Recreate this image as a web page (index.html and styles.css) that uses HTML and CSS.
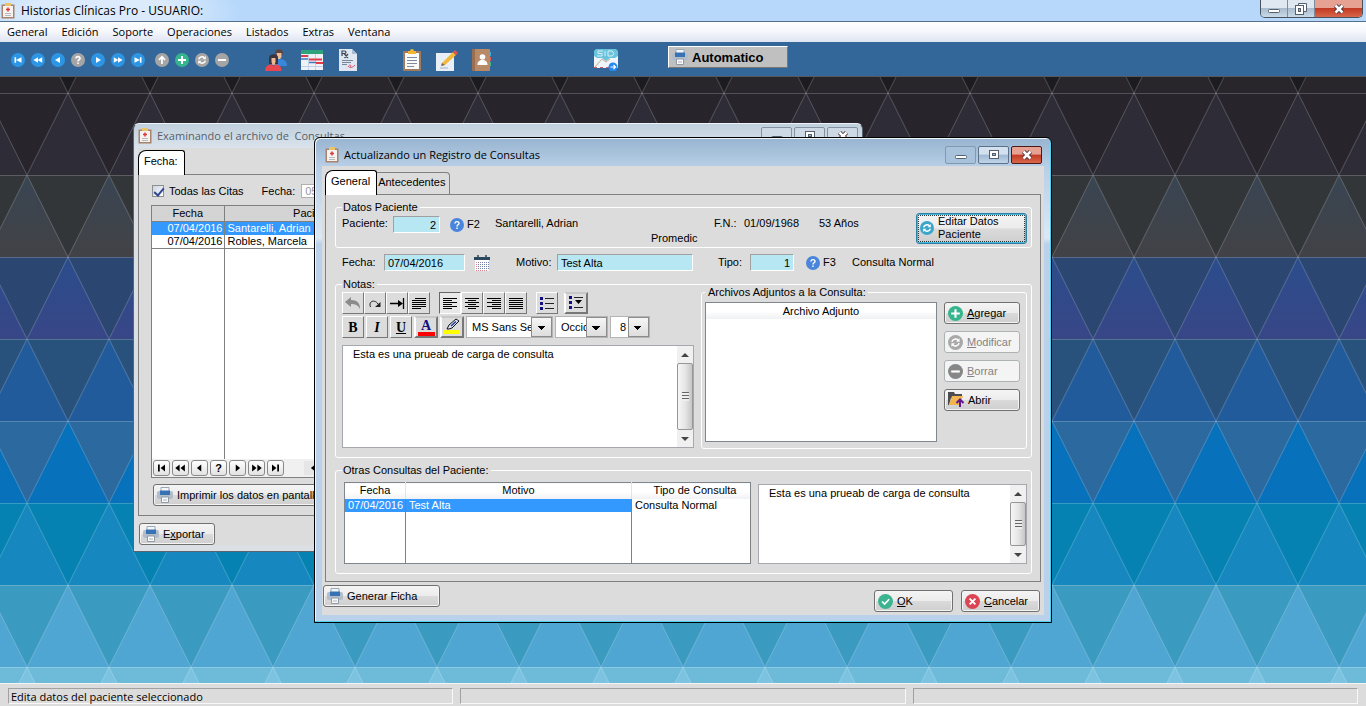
FILE: index.html
```html
<!DOCTYPE html>
<html lang="es">

<head>
    <meta charset="UTF-8">
    <meta name="viewport" content="width=device-width, initial-scale=1.0">
    <title>Historias Clínicas Pro</title>
    <link rel="stylesheet" href="styles.css">
</head>

<body>
    <!-- Icons -->
    <svg class="sprite" aria-hidden="true">
        <symbol id="i-app" viewBox="0 0 14 16">
            <rect x="0.5" y="1.5" width="13" height="14" fill="#a8826a" />
            <rect x="2" y="3" width="10" height="11" fill="#f5f3f2" />
            <rect x="4" y="0" width="6" height="3" fill="#e9c46a" />
            <path d="M7 4.500v4M5 6.500h4" stroke="#dd3a3a" stroke-width="1.500" />
            <path d="M4 10.500h6M4 12.500h6" stroke="#b9b9b9" />
        </symbol>
        <symbol id="i-first" viewBox="0 0 14 14">
            <circle cx="7" cy="7" r="7" fill="#2d96e4" />
            <path d="M3.500 4.200h1.600v5.600H3.500zM10.500 4.200v5.600L5 7z" fill="#fff" />
        </symbol>
        <symbol id="i-rew" viewBox="0 0 14 14">
            <circle cx="7" cy="7" r="7" fill="#2d96e4" />
            <path d="M7 4.200v5.600L2.400 7zM11.200 4.200v5.600L6.600 7z" fill="#fff" />
        </symbol>
        <symbol id="i-prev" viewBox="0 0 14 14">
            <circle cx="7" cy="7" r="7" fill="#2d96e4" />
            <path d="M9 4v6L4 7z" fill="#fff" />
        </symbol>
        <symbol id="i-ask" viewBox="0 0 14 14">
            <circle cx="7" cy="7" r="7" fill="#a5a5a5" />
            <path d="M5 5.600C5 3 9 3 9 5.400 9 6.800 7 6.700 7 8.400M7 9.500v1.500" stroke="#fff" stroke-width="1.600" fill="none" />
        </symbol>
        <symbol id="i-up" viewBox="0 0 14 14">
            <circle cx="7" cy="7" r="7" fill="#a5a5a5" />
            <path d="M7 11V4M4 6.800l3-3 3 3" stroke="#fff" stroke-width="1.700" fill="none" />
        </symbol>
        <symbol id="i-plus" viewBox="0 0 14 14">
            <circle cx="7" cy="7" r="7" fill="#35b58e" />
            <path d="M7 3v8M3 7h8" stroke="#fff" stroke-width="2" />
        </symbol>
        <symbol id="i-sync" viewBox="0 0 14 14">
            <circle cx="7" cy="7" r="7" fill="currentColor" />
            <path d="M3.600 6.400C4.200 3.800 7.500 3 9.600 4.800M10.400 7.600C9.800 10.200 6.500 11 4.400 9.200" stroke="#fff" stroke-width="1.400" fill="none" />
            <path d="M10.800 3v3.200H7.600zM3.200 11V7.800h3.200z" fill="#fff" />
        </symbol>
        <symbol id="i-minus" viewBox="0 0 14 14">
            <circle cx="7" cy="7" r="7" fill="currentColor" />
            <path d="M3 7h8" stroke="#fff" stroke-width="2" />
        </symbol>
        <symbol id="i-help" viewBox="0 0 14 14">
            <circle cx="7" cy="7" r="7" fill="#4a85dc" />
            <path d="M5 5.600C5 3 9 3 9 5.400 9 6.800 7 6.700 7 8.400M7 9.500v1.500" stroke="#fff" stroke-width="1.400" fill="none" />
        </symbol>
        <symbol id="i-users" viewBox="0 0 22 22">
            <circle cx="14" cy="4" r="3.800" fill="#5b4540" />
            <path d="M11.500 4h5v4l-1.500 2h-2z" fill="#f0bd98" />
            <path d="M9 17c0-5 2-7 6-7s7 2 7 7z" fill="#3a86d8" />
            <path d="M4 15V9c0-5 9-5 9 0v6z" fill="#3a3340" />
            <path d="M6.500 9h4v4l-1 3h-2l-1-3z" fill="#efb893" />
            <path d="M0 22c0-5 3-6.500 7-6.500l1.500 2 1.500-2c4 0 6.500 1.500 6.500 6.500z" fill="#ea4650" />
        </symbol>
        <symbol id="i-schedule" viewBox="0 0 22 20">
            <rect width="22" height="20" fill="#eef1f6" />
            <rect width="22" height="4" fill="#2fa37c" />
            <path d="M7.500 4v16M14.500 4v16M0 16.500h22" stroke="#c3d1e6" />
            <path d="M0 6h7M8 9.500h13M15 13h7" stroke="#df3b48" stroke-width="2" />
            <path d="M0 9h7M8 12.500h7" stroke="#4377c4" stroke-width="1.500" />
        </symbol>
        <symbol id="i-recipe" viewBox="0 0 18 22">
            <path d="M0 0h13l5 5v17H0z" fill="#dfe8f2" />
            <path d="M13 0v5h5z" fill="#a9bdd2" />
            <path d="M3 7V2h2.500c2 0 2 2.500 0 2.500H3M5 4.500L9 9M9 5L5.500 9" stroke="#3c4654" stroke-width="1.200" fill="none" />
            <path d="M3 11.500h11M3 13.500h9M3 15.500h5" stroke="#78879a" />
            <path d="M9 18c2-4 4-1 2 0s3 1 5-2" stroke="#e0516a" fill="none" />
        </symbol>
        <symbol id="i-notes" viewBox="0 0 18 22">
            <rect y="2" width="18" height="20" rx="1" fill="#a27a5c" />
            <rect x="2" y="4" width="14" height="16" fill="#fafafa" />
            <path d="M5 2h2a2 2 0 0 1 4 0h2v3H5z" fill="#f2b632" />
            <path d="M4 8.500h10M4 11.500h10M4 14.500h10M4 17.500h7" stroke="#7b8b9c" />
        </symbol>
        <symbol id="i-edit" viewBox="0 0 22 22">
            <rect y="4" width="18" height="18" fill="#e8eff7" />
            <path d="M6 14L17 3l3 3L9 16l-4 1z" fill="#f4b93c" />
            <path d="M17 3l2-2 3 3-2 2z" fill="#e2504f" />
            <path d="M6 14l3 2-4 1z" fill="#7d6a54" />
            <path d="M4 19h8" stroke="#a2b3c4" />
        </symbol>
        <symbol id="i-contacts" viewBox="0 0 20 22">
            <path d="M17 3h2v4h-2z" fill="#39a7d8" />
            <path d="M17 8h2v4h-2z" fill="#df5757" />
            <path d="M17 13h2v4h-2z" fill="#45b585" />
            <rect width="18" height="22" rx="1" fill="#b98a68" />
            <path d="M0 0h3v22H0z" fill="#9a6e50" />
            <circle cx="10.500" cy="8" r="2.800" fill="#fff" />
            <path d="M5.500 16c0-4 2-4 3.500-5h3c1.500 1 3.500 1 3.500 5z" fill="#fff" />
        </symbol>
        <symbol id="i-mail" viewBox="0 0 24 22">
            <path d="M0 3h24v16H0z" fill="#eef6f9" />
            <path d="M0 7V2l2-2h20l2 2v5l-3 2h-5l-4 3-4-3H3z" fill="#69c3dd" />
            <path d="M9 2H4v2.500h4V7H3M11 2v5M14 2v5h4l2-2.500L18 2z" stroke="#d7f1f8" fill="none" />
            <path d="M1 18l7-8M8 10l4 3 4-3" stroke="#c9a98f" fill="none" />
            <path d="M0 18.500h15" stroke="#d95b63" stroke-dasharray="3 3" />
            <circle cx="19" cy="18" r="4.500" fill="#2687f0" />
            <path d="M16.500 18h5M19.500 16l2 2-2 2" stroke="#fff" stroke-width="1.200" fill="none" />
        </symbol>
        <symbol id="i-printer" viewBox="0 0 16 16">
            <path d="M4 .5h8V5H4z" fill="#f3f6f9" stroke="#9aa7b4" />
            <rect y="4" width="16" height="8" rx="2" fill="#b2bdc9" />
            <path d="M3 3.500h10V8H3z" fill="#3773b4" />
            <path d="M4.500 10h7v5.500h-7z" fill="#fafafa" stroke="#8f9aa6" />
            <path d="M6 13h4" stroke="#a9b2ba" />
        </symbol>
        <symbol id="i-calendar" viewBox="0 0 16 16">
            <rect x="1" y="2" width="14" height="14" fill="#fff" />
            <path d="M0 2h16v3H0z" fill="#29485c" />
            <path d="M4 0v3M12 0v3" stroke="#29485c" stroke-width="1.500" />
            <path d="M4 7.500h11M4 9.500h11M4 11.500h11M4 13.500h11" stroke="#7283a8" stroke-dasharray="1 1" />
            <path d="M2 15.500h12M2.500 7v8" stroke="#e5838b" stroke-dasharray="1 1" />
        </symbol>
        <symbol id="i-folder" viewBox="0 0 16 16">
            <path d="M0 0h6l1 2h7v4H3L1 13H0z" fill="#4c4c50" />
            <path d="M4 4h11l-3 9H1z" fill="#f3b64f" />
            <path d="M12 15V8M8.500 11L12 7.500l3.500 3.500" stroke="#601a91" stroke-width="2" fill="none" />
        </symbol>
        <symbol id="i-ok" viewBox="0 0 14 14">
            <circle cx="7" cy="7" r="7" fill="#3cb391" />
            <path d="M3.800 7l2.400 2.400 4.200-4.500" stroke="#fff" stroke-width="1.600" fill="none" />
        </symbol>
        <symbol id="i-cancel" viewBox="0 0 14 14">
            <circle cx="7" cy="7" r="7" fill="#da4453" />
            <path d="M4.300 4.300l5.400 5.400M9.700 4.300L4.300 9.700" stroke="#fff" stroke-width="1.800" />
        </symbol>
        <symbol id="i-undo" viewBox="0 0 18 16">
            <path d="M1 7l6-5v3c6 0 9 3 9 9-2-4-5-5-9-5v3z" fill="#8b8b8b" />
        </symbol>
        <symbol id="i-redo" viewBox="0 0 18 16">
            <path d="M4.500 12C2 6 9 4 12 9" stroke="#222" fill="none" />
            <path d="M14.500 7v5H9z" fill="#222" />
        </symbol>
        <symbol id="i-tab" viewBox="0 0 18 16">
            <path d="M2 8.500h11M15.500 3v11" stroke="#000" stroke-width="1.300" />
            <path d="M10 5l5 3.500-5 3.500z" fill="#000" />
        </symbol>
        <symbol id="i-para" viewBox="0 0 18 16">
            <path d="M5 3.500h11M2 5.500h14M2 7.500h14M2 9.500h14M2 11.500h14M2 13.500h9" stroke="#000" />
        </symbol>
        <symbol id="i-left" viewBox="0 0 18 16">
            <path d="M2 3.500h14M2 5.500h9M2 7.500h14M2 9.500h9M2 11.500h14M2 13.500h9" stroke="#000" />
        </symbol>
        <symbol id="i-center" viewBox="0 0 18 16">
            <path d="M2 3.500h14M5 5.500h8M2 7.500h14M5 9.500h8M2 11.500h14M5 13.500h8" stroke="#000" />
        </symbol>
        <symbol id="i-right" viewBox="0 0 18 16">
            <path d="M2 3.500h14M7 5.500h9M2 7.500h14M7 9.500h9M2 11.500h14M7 13.500h9" stroke="#000" />
        </symbol>
        <symbol id="i-justify" viewBox="0 0 18 16">
            <path d="M2 3.500h14M2 5.500h14M2 7.500h14M2 9.500h14M2 11.500h14M2 13.500h14" stroke="#000" />
        </symbol>
        <symbol id="i-bullets" viewBox="0 0 18 16">
            <path d="M2 2h3v3H2zM2 7h3v3H2zM2 12h3v3H2z" fill="#101080" />
            <path d="M7 3.500h9M7 8.500h9M7 13.500h9" stroke="#222" />
        </symbol>
        <symbol id="i-bulletmenu" viewBox="0 0 18 16">
            <path d="M2 1h3v3H2zM2 6h3v3H2zM2 11h3v3H2z" fill="#101080" />
            <path d="M7 2.500h9M7 12.500h9" stroke="#222" />
            <path d="M8 5h7l-3.500 4z" fill="#000" />
        </symbol>
        <symbol id="i-marker" viewBox="0 0 18 18">
            <path d="M1 12h16v4H1z" fill="#ffff00" />
            <path d="M4 11l2-4 7-6 3 2-7 7-3 1z" fill="#dbe6f5" stroke="#111" />
            <path d="M8 8l5-4.500" stroke="#2038a0" stroke-width="1.500" />
        </symbol>
        <symbol id="n-first" viewBox="0 0 16 16">
            <path d="M4 4h2v8H4zM12 4v8L7 8z" />
        </symbol>
        <symbol id="n-rew" viewBox="0 0 16 16">
            <path d="M7 4v8L2 8zM13 4v8L8 8z" />
        </symbol>
        <symbol id="n-prev" viewBox="0 0 16 16">
            <path d="M10 4v8L5 8z" />
        </symbol>
        <symbol id="n-next" viewBox="0 0 16 16">
            <path d="M6 4v8l5-4z" />
        </symbol>
        <symbol id="n-ff" viewBox="0 0 16 16">
            <path d="M3 4v8l5-4zM9 4v8l5-4z" />
        </symbol>
        <symbol id="n-last" viewBox="0 0 16 16">
            <path d="M4 4v8l5-4zM10 4h2v8h-2z" />
        </symbol>
        <symbol id="w-min" viewBox="0 0 14 12">
            <rect x="1.500" y="6.500" width="11" height="3" rx="1" fill="#fff" stroke="#55606e" />
        </symbol>
        <symbol id="w-max" viewBox="0 0 14 12">
            <rect x="2.500" y="1.500" width="9" height="8" fill="#fff" stroke="#55606e" />
            <rect x="5.500" y="4.500" width="3" height="2" fill="#9fb4cc" stroke="#55606e" />
        </symbol>
        <symbol id="w-restore" viewBox="0 0 14 12">
            <path d="M4.500 .5h8v8h-8z" fill="#fff" stroke="#55606e" />
            <rect x="1.500" y="2.500" width="8" height="9" fill="#fff" stroke="#55606e" />
            <rect x="4.500" y="5.500" width="2" height="3" fill="#9fb4cc" stroke="#55606e" />
        </symbol>
        <symbol id="w-close" viewBox="0 0 14 12">
            <path d="M3.500 2.500l7 7M10.500 2.500l-7 7" stroke="#4d3238" stroke-width="4.400" />
            <path d="M3.500 2.500l7 7M10.500 2.500l-7 7" stroke="#fff" stroke-width="2.500" />
        </symbol>
    </svg>

    <header class="titlebar">
        <svg class="app-icon"><use href="#i-app" /></svg>
        <h1>Historias Clínicas Pro - USUARIO:</h1>
        <div class="caption-buttons">
            <button aria-label="Minimizar"><svg><use href="#w-min" /></svg></button>
            <button aria-label="Restaurar"><svg><use href="#w-restore" /></svg></button>
            <button class="close" aria-label="Cerrar"><svg><use href="#w-close" /></svg></button>
        </div>
    </header>

    <nav class="menu">
        <a href="#">General</a>
        <a href="#">Edición</a>
        <a href="#">Soporte</a>
        <a href="#">Operaciones</a>
        <a href="#">Listados</a>
        <a href="#">Extras</a>
        <a href="#">Ventana</a>
    </nav>

    <div class="toolbar">
        <div class="tool-group nav-tools">
            <button aria-label="Primero"><svg><use href="#i-first" /></svg></button>
            <button aria-label="Página anterior"><svg><use href="#i-rew" /></svg></button>
            <button aria-label="Anterior"><svg><use href="#i-prev" /></svg></button>
            <button aria-label="Buscar"><svg><use href="#i-ask" /></svg></button>
            <button aria-label="Siguiente"><svg class="flip"><use href="#i-prev" /></svg></button>
            <button aria-label="Página siguiente"><svg class="flip"><use href="#i-rew" /></svg></button>
            <button aria-label="Último"><svg class="flip"><use href="#i-first" /></svg></button>
        </div>
        <div class="tool-group edit-tools">
            <button aria-label="Seleccionar"><svg><use href="#i-up" /></svg></button>
            <button aria-label="Insertar"><svg><use href="#i-plus" /></svg></button>
            <button aria-label="Cambiar"><svg><use href="#i-sync" /></svg></button>
            <button aria-label="Eliminar"><svg><use href="#i-minus" /></svg></button>
        </div>
        <div class="tool-group big-tools">
            <button aria-label="Pacientes"><svg><use href="#i-users" /></svg></button>
            <button aria-label="Turnos"><svg><use href="#i-schedule" /></svg></button>
            <button aria-label="Recetas"><svg><use href="#i-recipe" /></svg></button>
        </div>
        <div class="tool-group big-tools second">
            <button aria-label="Consultas"><svg><use href="#i-notes" /></svg></button>
            <button aria-label="Notas"><svg><use href="#i-edit" /></svg></button>
            <button aria-label="Agenda"><svg><use href="#i-contacts" /></svg></button>
        </div>
        <div class="tool-group big-tools third">
            <button aria-label="Enviar correo"><svg><use href="#i-mail" /></svg></button>
        </div>
        <button class="auto"><svg><use href="#i-printer" /></svg>Automatico</button>
    </div>

    <main class="desktop">
        <svg class="wallpaper" aria-hidden="true">
            <defs>
                <linearGradient id="slate" x2="0" y2="1">
                    <stop offset="0" stop-color="#394553" />
                    <stop offset="1" stop-color="#424246" />
                </linearGradient>
                <linearGradient id="navy" x2="0" y2="1">
                    <stop offset="0" stop-color="#2b4d8c" />
                    <stop offset="1" stop-color="#384686" />
                </linearGradient>
                <pattern id="triangles" x="27" y="0" width="82" height="1000" patternUnits="userSpaceOnUse">
                    <rect width="82" height="16" fill="#28262b" />
                    <path d="M33 0h16l-8 16z" fill="#1c1c20" />
                    <rect y="16" width="82" height="82" fill="#27252b" />
                    <path d="M41 16l41 82H0z" fill="#2e2c37" />
                    <rect y="98" width="82" height="82" fill="url(#slate)" />
                    <path d="M0 98h82l-41 82z" fill="#323638" />
                    <rect y="180" width="82" height="82" fill="#2b4671" />
                    <path d="M41 180l41 82H0z" fill="url(#navy)" />
                    <rect y="262" width="82" height="82" fill="#215b9b" />
                    <path d="M0 262h82l-41 82z" fill="#28527c" />
                    <rect y="344" width="82" height="82" fill="#2c699f" />
                    <path d="M41 344l41 82H0z" fill="#0871bb" />
                    <rect y="426" width="82" height="82" fill="#1788bf" />
                    <path d="M0 426h82l-41 82z" fill="#0582b2" />
                    <rect y="508" width="82" height="82" fill="#3a9abf" />
                    <path d="M41 508l41 82H0z" fill="#50a6d3" />
                    <rect y="590" width="82" height="410" fill="#7cc3e2" />
                    <path d="M0 590h82l-8 16H8z" fill="#6dbbd9" />
                    <g fill="none" stroke="#fff" stroke-opacity=".2">
                        <path d="M33 0l49 98-41 82 41 82-41 82 41 82-41 82 41 82-8 16M49 0L0 98l41 82-41 82 41 82-41 82 41 82-41 82 8 16" />
                        <path d="M0 16.500h82M0 98.500h82M0 180.500h82M0 262.500h82M0 344.500h82M0 426.500h82M0 508.500h82M0 590.500h82" />
                    </g>
                </pattern>
            </defs>
            <rect width="100%" height="100%" fill="url(#triangles)" />
        </svg>

        <!-- Browse window -->
        <section class="window browse">
            <div class="window-title">
                <svg class="app-icon"><use href="#i-app" /></svg>
                <h2>Examinando el archivo de  Consultas</h2>
                <div class="window-buttons">
                    <button aria-label="Minimizar"><svg><use href="#w-min" /></svg></button>
                    <button aria-label="Maximizar"><svg><use href="#w-max" /></svg></button>
                    <button aria-label="Cerrar"><svg><use href="#w-close" /></svg></button>
                </div>
            </div>
            <div class="client">
                <div class="tabs">
                    <button class="tab active">Fecha:</button>
                </div>
                <div class="panel">
                    <div class="filter">
                        <input type="checkbox" id="todas" checked>
                        <label for="todas">Todas las Citas</label>
                        <label class="date-label" for="filtro-fecha">Fecha:</label>
                        <input type="text" id="filtro-fecha" value="05/01/2022" disabled>
                    </div>
                    <div class="browse-box">
                        <table class="browse-table">
                            <thead>
                                <tr>
                                    <th class="col-date">Fecha</th>
                                    <th class="col-name">Paciente</th>
                                    <th></th>
                                </tr>
                            </thead>
                            <tbody>
                                <tr class="selected">
                                    <td>07/04/2016</td>
                                    <td>Santarelli, Adrian</td>
                                    <td></td>
                                </tr>
                                <tr class="last">
                                    <td>07/04/2016</td>
                                    <td>Robles, Marcela</td>
                                    <td></td>
                                </tr>
                                <tr class="filler">
                                    <td></td>
                                    <td></td>
                                    <td></td>
                                </tr>
                            </tbody>
                        </table>
                        <div class="vcr">
                            <button aria-label="Primero"><svg><use href="#n-first" /></svg></button>
                            <button aria-label="Página anterior"><svg><use href="#n-rew" /></svg></button>
                            <button aria-label="Anterior"><svg><use href="#n-prev" /></svg></button>
                            <button>?</button>
                            <button aria-label="Siguiente"><svg><use href="#n-next" /></svg></button>
                            <button aria-label="Página siguiente"><svg><use href="#n-ff" /></svg></button>
                            <button aria-label="Último"><svg><use href="#n-last" /></svg></button>
                            <div class="hscroll"><svg><use href="#n-prev" /></svg></div>
                        </div>
                    </div>
                    <button class="btn print"><svg><use href="#i-printer" /></svg>Imprimir los datos en pantalla</button>
                </div>
                <button class="btn export"><svg><use href="#i-printer" /></svg><span>E<u>x</u>portar</span></button>
            </div>
        </section>

        <!-- Record form window -->
        <section class="window form">
            <div class="window-title">
                <svg class="app-icon"><use href="#i-app" /></svg>
                <h2>Actualizando un Registro de Consultas</h2>
                <div class="window-buttons">
                    <button class="dim" aria-label="Minimizar"><svg><use href="#w-min" /></svg></button>
                    <button aria-label="Maximizar"><svg><use href="#w-max" /></svg></button>
                    <button class="close" aria-label="Cerrar"><svg><use href="#w-close" /></svg></button>
                </div>
            </div>
            <div class="client">
                <div class="tabs">
                    <button class="tab active">General</button>
                    <button class="tab">Antecedentes</button>
                </div>
                <div class="panel">
                    <fieldset>
                        <legend>Datos Paciente</legend>
                        <div class="patient">
                            <label for="paciente">Paciente:</label>
                            <input type="text" class="field number" id="paciente" value="2">
                            <span class="lookup"><svg><use href="#i-help" /></svg>F2</span>
                            <span class="name">Santarelli, Adrian</span>
                            <span class="born">F.N.:</span>
                            <span>01/09/1968</span>
                            <span>53 Años</span>
                            <button class="btn edit-patient"><svg><use href="#i-sync" /></svg>Editar Datos<br>Paciente</button>
                            <span class="plan">Promedic</span>
                        </div>
                    </fieldset>

                    <div class="visit">
                        <label for="fecha">Fecha:</label>
                        <input type="text" class="field" id="fecha" value="07/04/2016">
                        <button class="calendar" aria-label="Calendario"><svg><use href="#i-calendar" /></svg></button>
                        <label for="motivo">Motivo:</label>
                        <input type="text" class="field" id="motivo" value="Test Alta">
                        <label for="tipo">Tipo:</label>
                        <input type="text" class="field number" id="tipo" value="1">
                        <span class="lookup"><svg><use href="#i-help" /></svg>F3</span>
                        <span>Consulta Normal</span>
                    </div>

                    <fieldset class="notes">
                        <legend>Notas:</legend>
                        <div class="editor">
                            <div class="format">
                                <button aria-label="Deshacer"><svg><use href="#i-undo" /></svg></button>
                                <button aria-label="Rehacer"><svg><use href="#i-redo" /></svg></button>
                                <button aria-label="Tabulación"><svg><use href="#i-tab" /></svg></button>
                                <button aria-label="Párrafo"><svg><use href="#i-para" /></svg></button>
                                <button class="pressed space" aria-label="Izquierda"><svg><use href="#i-left" /></svg></button>
                                <button aria-label="Centrar"><svg><use href="#i-center" /></svg></button>
                                <button aria-label="Derecha"><svg><use href="#i-right" /></svg></button>
                                <button aria-label="Justificar"><svg><use href="#i-justify" /></svg></button>
                                <button class="space" aria-label="Viñetas"><svg><use href="#i-bullets" /></svg></button>
                                <button class="framed" aria-label="Tipo de viñeta"><svg><use href="#i-bulletmenu" /></svg></button>
                            </div>
                            <div class="format fonts">
                                <button><b>B</b></button>
                                <button><i>I</i></button>
                                <button><u>U</u></button>
                                <button class="framed ink"><span>A</span></button>
                                <button class="framed marker" aria-label="Resaltar"><svg><use href="#i-marker" /></svg></button>
                                <span class="combo font-name"><select aria-label="Fuente"><option>MS Sans Serif</option></select></span>
                                <span class="combo charset"><select aria-label="Alfabeto"><option>Occidental</option></select></span>
                                <span class="combo size"><select aria-label="Tamaño"><option>8</option></select></span>
                            </div>
                            <div class="memo">
                                <textarea aria-label="Notas">Esta es una prueab de carga de consulta</textarea>
                                <div class="scrollbar"><i class="arrow up"></i><i class="thumb"></i><i class="arrow down"></i></div>
                            </div>
                        </div>
                        <fieldset class="attachments">
                            <legend>Archivos Adjuntos a la Consulta:</legend>
                            <div class="files">
                                <div class="files-head">Archivo Adjunto</div>
                            </div>
                            <div class="file-buttons">
                                <button class="btn"><svg><use href="#i-plus" /></svg><span><u>A</u>gregar</span></button>
                                <button class="btn" disabled><svg><use href="#i-sync" /></svg><span><u>M</u>odificar</span></button>
                                <button class="btn dark" disabled><svg><use href="#i-minus" /></svg><span><u>B</u>orrar</span></button>
                                <button class="btn open"><svg><use href="#i-folder" /></svg>Abrir</button>
                            </div>
                        </fieldset>
                    </fieldset>

                    <fieldset class="others">
                        <legend>Otras Consultas del Paciente:</legend>
                        <table class="others-table">
                            <thead>
                                <tr>
                                    <th class="col-date">Fecha</th>
                                    <th>Motivo</th>
                                    <th class="col-type">Tipo de Consulta</th>
                                </tr>
                            </thead>
                            <tbody>
                                <tr>
                                    <td class="selected">07/04/2016</td>
                                    <td class="selected">Test Alta</td>
                                    <td>Consulta Normal</td>
                                </tr>
                                <tr class="filler">
                                    <td></td>
                                    <td></td>
                                    <td></td>
                                </tr>
                            </tbody>
                        </table>
                        <div class="memo">
                            <textarea aria-label="Notas de la consulta" readonly>Esta es una prueab de carga de consulta</textarea>
                            <div class="scrollbar"><i class="arrow up"></i><i class="thumb"></i><i class="arrow down"></i></div>
                        </div>
                    </fieldset>
                </div>
                <div class="actions">
                    <button class="btn generate"><svg><use href="#i-printer" /></svg>Generar Ficha</button>
                    <button class="btn confirm"><svg><use href="#i-ok" /></svg><span><u>O</u>K</span></button>
                    <button class="btn confirm"><svg><use href="#i-cancel" /></svg><span><u>C</u>ancelar</span></button>
                </div>
            </div>
        </section>
    </main>

    <footer class="statusbar">
        <div>Edita datos del paciente seleccionado</div>
        <div></div>
        <div></div>
    </footer>
</body>

</html>
```
FILE: styles.css
```css
* {
    margin: 0;
    padding: 0;
    box-sizing: border-box;
}

body {
    display: flex;
    flex-direction: column;
    min-height: 100vh;
    overflow: hidden;
    font-family: "Liberation Sans", Arial, sans-serif;
    font-size: 11px;
    line-height: 13px;
    color: #000;
}

button,
input,
select,
textarea {
    font: inherit;
    color: inherit;
}

button {
    border: none;
    background: none;
}

svg {
    display: block;
    flex: none;
}

.sprite {
    position: absolute;
    width: 0;
    height: 0;
}

.app-icon {
    width: 14px;
    height: 16px;
}

/* Main title bar */
.titlebar {
    display: flex;
    align-items: center;
    height: 22px;
    padding-left: 1px;
    background: radial-gradient(ellipse 140px 40px at 100px 12px, #dcebfb 50%, transparent), #b7d8fb;
    border-bottom: 1px solid #54708e;
}

.titlebar h1,
.window-title h2,
.menu,
.statusbar {
    font-family: "Open Sans", "Segoe UI", sans-serif;
    font-size: 11px;
    font-weight: normal;
    line-height: 16px;
    white-space: pre;
}

.titlebar h1 {
    margin-left: 6px;
    font-size: 12px;
}

.caption-buttons {
    display: flex;
    align-self: flex-start;
    margin-left: auto;
    margin-right: 3px;
    border: 1px solid #46535f;
    border-top: none;
    border-radius: 0 0 5px 5px;
    overflow: hidden;
}

.caption-buttons button {
    display: flex;
    align-items: center;
    justify-content: center;
    width: 27px;
    height: 17px;
    border-right: 1px solid #7e8d9c;
    background: linear-gradient(#dfe8f1 45%, #a9bccd 50%, #c9d9e8);
}

.caption-buttons .close {
    width: 47px;
    border: none;
}

.close {
    background: linear-gradient(#e6a192 45%, #c23a23 50%, #d8674b) !important;
}

.caption-buttons svg,
.window-buttons svg {
    width: 14px;
    height: 12px;
}

.menu {
    display: flex;
    gap: 14px;
    height: 20px;
    padding: 2px 7px;
    background: linear-gradient(#fff, #f4f6fb 50%, #dfe4f1);
}

.menu a {
    color: #000;
    text-decoration: none;
}

/* Toolbar */
.toolbar {
    display: flex;
    align-items: center;
    height: 35px;
    padding: 2px 0 0 11px;
    background: #336699;
    border-bottom: 1px solid #55595f;
}

.tool-group {
    display: flex;
    align-items: center;
}

.nav-tools,
.edit-tools {
    gap: 6px;
}

.nav-tools svg,
.edit-tools svg {
    width: 14px;
    height: 14px;
    color: #a5a5a5;
}

.flip {
    transform: scaleX(-1);
}

.edit-tools {
    margin-left: 10px;
}

.big-tools {
    gap: 14px;
    margin-left: 36px;
}

.big-tools svg {
    width: 22px;
    height: 22px;
}

.big-tools.second {
    margin-left: 42px;
    gap: 13px;
}

.big-tools.third {
    margin-left: 101px;
}

.big-tools.third svg {
    width: 24px;
}

.auto {
    display: flex;
    align-items: center;
    gap: 4px;
    width: 120px;
    height: 22px;
    margin: 0 0 6px 50px;
    padding-left: 3px;
    background: #c0c0c0;
    border: 1px solid;
    border-color: #fff #777 #777 #fff;
    font-size: 13px;
    font-weight: bold;
}

.auto svg,
.btn svg {
    width: 16px;
    height: 16px;
}

/* Desktop and windows */
.desktop {
    position: relative;
    flex: 1;
    min-height: 606px;
    overflow: hidden;
}

.wallpaper {
    position: absolute;
    width: 100%;
    height: 100%;
}

.window {
    position: absolute;
    border-radius: 6px 6px 0 0;
}

.browse {
    left: 133px;
    top: 46px;
    width: 730px;
    padding: 0 4px 4px;
    background: linear-gradient(#c0d0dd, #dae3ec 24px, #dcdfe3 60px);
    border: 1px solid #5a646e;
    border-top-color: #eef3f7;
}

.form {
    left: 314px;
    top: 60px;
    width: 738px;
    padding: 0 7px 7px;
    background: linear-gradient(#98b4d0, #b7cee6 28px, #dbe9f6 100px, #b9d1ea 106px);
    border: 1px solid #000;
    box-shadow: inset -1px -1px #4fd0ee, inset 1px 1px #eef6fc;
}

.window-title {
    display: flex;
    align-items: center;
}

.browse .window-title {
    height: 24px;
    color: #56606a;
}

.form .window-title {
    height: 28px;
    padding: 6px 2px 0 3px;
}

.window-title h2 {
    margin-left: 5px;
}

.window-buttons {
    display: flex;
    gap: 2px;
    margin-left: auto;
}

.window-buttons button {
    display: flex;
    align-items: center;
    justify-content: center;
    width: 31px;
    height: 18px;
    background: linear-gradient(#d3e0ee 45%, #9fb9d4 50%, #bfd5ea);
    border: 1px solid #5d7288;
    border-radius: 2px;
}

.window-buttons .dim {
    border-color: #8299b0;
    background: #a9c2dc;
}

.browse .window-buttons button {
    background: #cddae6;
    border-color: #8493a1;
}

.window-buttons .close {
    border-color: #4b1a17;
}

.client {
    background: #dcdcdc;
}

.browse .client {
    padding-top: 2px;
}

.form .client {
    padding: 4px 3px 3px 1px;
}

.tabs {
    display: flex;
    align-items: flex-end;
}

.form .tabs,
.form .panel {
    margin-left: 2px;
}

.tab {
    height: 22px;
    padding: 0 4px 2px 1px;
    border: 1px solid #808080;
    border-left: none;
    border-bottom: none;
    border-radius: 0 4px 0 0;
}

.tab.active {
    position: relative;
    height: 25px;
    margin-bottom: -1px;
    padding: 0 6px 4px 5px;
    background: #fff;
    border: 1px solid #000;
    border-bottom: none;
    border-radius: 8px 3px 0 0;
}

.panel {
    border: 1px solid #808080;
}

.form .panel {
    padding: 6px 8px 7px 9px;
}

/* Browse window contents */
.browse .panel {
    padding: 9px 12px 9px;
}

.filter {
    display: flex;
    align-items: center;
    height: 14px;
}

.filter input[type="checkbox"] {
    width: 12px;
    height: 12px;
    margin: 0 5px 0 1px;
    appearance: none;
    background: linear-gradient(135deg, #ccd4e4, #fff);
    border: 1px solid #8e8f8f;
}

.filter input[type="checkbox"]:checked::before {
    content: "";
    display: block;
    width: 4px;
    height: 8px;
    margin: 0 0 0 3px;
    border: solid #32498f;
    border-width: 0 2px 2px 0;
    transform: rotate(40deg);
}

.date-label {
    margin-left: 18px;
}

.filter input[type="text"] {
    width: 80px;
    height: 14px;
    margin-left: 6px;
    padding-left: 3px;
    border: 1px solid #b0b0b0;
    background: #fff;
    color: #999;
}

.browse-box {
    margin-top: 7px;
    background: #fff;
    border: 1px solid #808080;
}

table {
    border-collapse: collapse;
    table-layout: fixed;
    width: 100%;
}

th {
    font-weight: normal;
}

td {
    white-space: nowrap;
    overflow: hidden;
}

.browse-table th {
    height: 15px;
    background: #d4d4d4;
    border-bottom: 1px solid #808080;
}

.browse-table th,
.browse-table td {
    border-right: 1px solid #808080;
}

.browse-table td {
    height: 13px;
    padding: 0 1px 0 3px;
    line-height: 13px;
}

.browse-table td:first-child {
    text-align: right;
}

.browse-table .col-date {
    width: 72px;
}

.browse-table .col-name {
    width: 181px;
}

.selected {
    background: #3399ff;
    color: #fff;
}

.browse-table .last {
    border-bottom: 1px solid #808080;
}

.browse-table .filler td {
    height: 211px;
}

.vcr {
    display: flex;
    align-items: center;
    gap: 2px;
    height: 18px;
    padding-left: 1px;
    background: #f0f0f0;
}

.vcr button {
    width: 17px;
    height: 16px;
    background: linear-gradient(#fff, #e2e2e2);
    border: 1px solid #8a8a8a;
    border-radius: 3px;
    font-weight: bold;
    line-height: 14px;
}

.vcr svg {
    width: 15px;
    height: 14px;
}

.hscroll {
    flex: 1;
    margin-left: 18px;
    padding-left: 2px;
    background: #e6e6e6;
}

.btn {
    display: flex;
    align-items: center;
    gap: 4px;
    height: 22px;
    padding: 0 3px;
    background: linear-gradient(#f4f4f4, #ececec 48%, #dadada 52%, #cfcfcf);
    border: 1px solid #707070;
    border-radius: 3px;
    box-shadow: inset 0 0 0 1px #f4f4f4;
    text-align: left;
    white-space: nowrap;
}

.btn:disabled {
    color: #838383;
    background: #f4f4f4;
    border-color: #adb2b5;
}

.print {
    width: 172px;
    margin: 6px 0 0 2px;
}

.export {
    width: 76px;
    margin: 7px 0 2px 1px;
}

/* Form contents */
fieldset {
    min-width: 0;
    padding: 0 4px 4px 6px;
    border: 1px solid #fff;
    border-radius: 3px;
}

legend {
    height: 12px;
    padding: 0 2px 0 1px;
    line-height: 12px;
}

.patient {
    display: grid;
    grid-template-columns: 51px 57px 45px 156px 63px 30px 75px 1fr 111px;
    grid-template-rows: 20px 10px;
    align-items: center;
    min-height: 30px;
}

.patient span {
    white-space: nowrap;
}

.field {
    width: 100%;
    height: 17px;
    padding: 0 3px;
    background: #b7e7f2;
    border: 1px solid;
    border-color: #a0a0a0 #fff #fff #a0a0a0;
}

.number {
    text-align: right;
}

#paciente {
    width: 47px;
    margin-top: 3px;
}

.patient .lookup {
    padding-top: 3px;
}

.lookup {
    display: flex;
    align-items: center;
    gap: 3px;
}

.lookup svg {
    width: 14px;
    height: 14px;
}

.name {
    grid-column: 4 / 6;
}

.born {
    grid-column: 6;
}

.edit-patient {
    grid-column: 9;
    grid-row: 1 / 3;
    height: 31px;
    border-color: #2c7fa5;
    box-shadow: inset 0 0 0 1px #45b9e0;
    outline: 1px dotted #333;
    outline-offset: -3px;
}

.edit-patient svg {
    width: 14px;
    height: 14px;
    color: #3aa6ca;
}

.plan {
    grid-column: 5;
    grid-row: 2;
}

.visit {
    display: grid;
    grid-template-columns: 42px 90px 42px 41px 161px 32px 56px 46px 1fr;
    align-items: center;
    margin: 6px 0 7px 7px;
}

#fecha {
    width: 81px;
}

#motivo {
    width: 136px;
}

#tipo {
    width: 44px;
}

.calendar svg {
    width: 16px;
    height: 16px;
}

.notes {
    display: flex;
    gap: 7px;
    padding-bottom: 8px;
}

.editor {
    width: 352px;
    padding-top: 2px;
}

.format {
    display: flex;
    height: 22px;
    margin-bottom: 2px;
}

.format button {
    display: flex;
    align-items: center;
    justify-content: center;
    width: 22px;
    height: 22px;
    border: 1px solid;
    border-color: #fff #777 #777 #fff;
    background: #dcdcdc;
}

.format svg {
    width: 18px;
    height: 16px;
}

.format .space {
    margin-left: 9px;
}

.format .pressed {
    background: #e8e8e8;
    border-color: #666 #fff #fff #666;
}

.format .framed {
    width: 24px;
    margin-left: 6px;
    border: 2px solid;
    border-color: #c8c8c8 #777 #777 #fff;
}

.fonts {
    gap: 2px;
    margin-bottom: 7px;
}

.fonts button {
    font-family: "Liberation Serif", serif;
    font-size: 14px;
    font-weight: bold;
}

.fonts .framed {
    margin-left: 0;
}

.ink span {
    width: 17px;
    color: #101080;
    border-bottom: 4px solid #f00;
    line-height: 13px;
}

.marker svg {
    height: 18px;
}

.combo {
    display: flex;
    height: 22px;
    background: #fff;
    border: 1px solid #b4b4b4;
}

.combo select {
    flex: 1;
    min-width: 0;
    padding-left: 5px;
    appearance: none;
    background: #fff;
    border: none;
    outline: none;
}

.combo::after {
    content: "";
    width: 19px;
    border: 1px solid #8c8c8c;
    background: linear-gradient(45deg, transparent 50%, #000 50%) 5px 8px / 4px 4px no-repeat, linear-gradient(-45deg, transparent 50%, #000 50%) 9px 8px / 4px 4px no-repeat, linear-gradient(#f6f6f6, #ddd);
}

.font-name {
    width: 87px;
}

.charset {
    width: 53px;
}

.size {
    width: 40px;
}

.size select {
    padding-left: 9px;
}

.memo {
    display: flex;
    height: 103px;
    background: #fff;
    border: 1px solid #a5a9ae;
}

.memo textarea {
    flex: 1;
    padding: 2px 10px;
    background: none;
    border: none;
    resize: none;
    outline: none;
}

.scrollbar {
    display: flex;
    flex-direction: column;
    width: 16px;
    background: #f0f0f0;
}

.arrow {
    width: 8px;
    height: 17px;
    margin: 0 auto;
    background: #444;
    clip-path: polygon(0 11px, 50% 7px, 100% 11px);
}

.arrow.down {
    clip-path: polygon(0 7px, 50% 11px, 100% 7px);
}

.thumb {
    flex: 1;
    border: 1px solid #979797;
    border-radius: 2px;
    background: repeating-linear-gradient(#666 0 1px, #eee 1px 3px) 50% 50% / 7px 9px no-repeat, linear-gradient(90deg, #f6f6f6, #e6e6e6 50%, #c6c6c6);
}

.attachments {
    display: flex;
    flex: 1;
    gap: 7px;
    margin-top: -4px;
    padding: 4px 6px 6px 3px;
}

.attachments legend {
    padding-left: 3px;
}

.files {
    width: 232px;
    height: 140px;
    background: #fff;
    border: 1px solid #7f868c;
}

.files-head {
    height: 16px;
    line-height: 16px;
    text-align: center;
    background: linear-gradient(#fff 50%, #f0f1f3);
}

.file-buttons {
    display: flex;
    flex-direction: column;
    gap: 7px;
    width: 76px;
}

.file-buttons svg,
.confirm svg {
    width: 15px;
    height: 15px;
    color: #a9a9a9;
}

.dark svg {
    color: #878787;
}

.file-buttons .open svg {
    width: 16px;
    height: 16px;
}

.others {
    display: flex;
    align-items: flex-end;
    gap: 7px;
    margin-top: 6px;
    padding: 6px 4px 9px 6px;
}

.others-table {
    width: 407px;
    margin-left: 2px;
    background: #fff;
    border: 1px solid #7f868c;
}

.others-table th {
    height: 16px;
    background: linear-gradient(#fff 50%, #f0f1f3);
    border-right: 1px solid #e2e3e5;
}

.others-table th:last-child {
    border-right-color: #7f868c;
}

.others-table td {
    height: 13px;
    padding: 0 3px;
    line-height: 13px;
    border-right: 1px solid #808080;
}

.others-table .filler td {
    height: 52px;
}

.others-table .col-date {
    width: 61px;
}

.others-table .col-type {
    width: 119px;
    padding-left: 8px;
}

.others .memo {
    flex: 1;
    height: 80px;
}

.actions {
    display: flex;
    align-items: flex-end;
    gap: 8px;
    height: 30px;
    padding: 3px 1px 0 0;
}

.generate {
    align-self: flex-start;
    width: 117px;
    margin-right: auto;
}

.confirm {
    width: 79px;
}

/* Status bar */
.statusbar {
    display: flex;
    gap: 7px;
    height: 23px;
    padding: 4px 8px 2px;
    background: #dcdcdc;
    border-top: 1px solid #f4f4f4;
}

.statusbar div {
    flex: 1;
    padding-left: 2px;
    line-height: 15px;
    border: 1px solid;
    border-color: #a0a0a0 #f8f8f8 #f8f8f8 #a0a0a0;
}
```
